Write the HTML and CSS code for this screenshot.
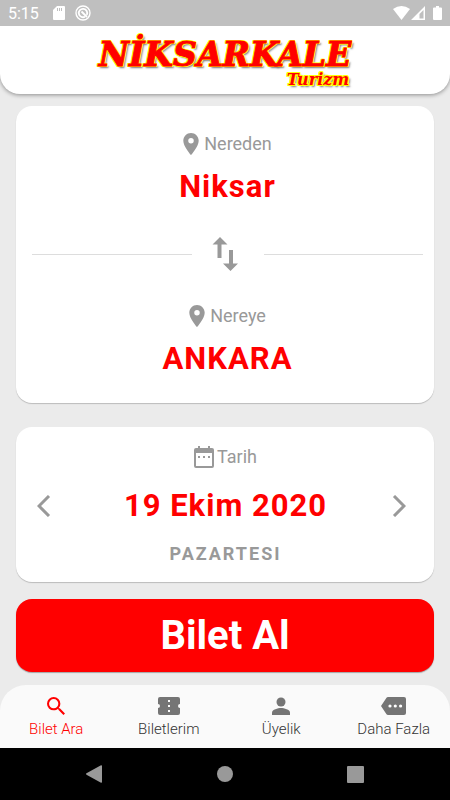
FILE: index.html
```
<!DOCTYPE html>
<html lang="tr">
<head>
  <meta charset="UTF-8" />
  <meta name="viewport" content="width=device-width, initial-scale=1" />
  <title>Niksarkale Turizm</title>
  <link rel="stylesheet" href="styles.css">
</head>
<body>
  <div class="statusbar">
    <span class="clock">5:15</span>
    <svg class="sd" width="12" height="14" viewBox="0 0 12 14"><path fill="#fff" d="M4 0h7a1 1 0 0 1 1 1v12a1 1 0 0 1-1 1H1a1 1 0 0 1-1-1V4z"/><path stroke="#bfbfbf" d="M4.500 2v3M6.500 2v3M8.500 2v3"/></svg>
    <svg class="sync" width="16" height="16" viewBox="0 0 16 16" fill="none" stroke="#fff"><circle cx="8" cy="8" r="7" stroke-width="1.400"/><path stroke-width="1.800" d="M10 11.700A4.200 4.200 0 1 1 11.800 9.800M6.500 6.500l5.500 5.500"/></svg>
    <div class="signals">
      <svg width="17" height="14" viewBox="0 0 17 14"><path fill="#fff" d="M0 3Q8.500-3 17 3L8.500 14z"/></svg>
      <svg width="14" height="14" viewBox="0 0 14 14"><path fill="#fff" fill-rule="evenodd" d="M14 0v14H0zM12.500 4v8.500h-4V8z"/></svg>
      <svg class="battery" width="9" height="14" viewBox="0 0 9 14"><path fill="#fff" d="M3 0h3v1.500h2a1 1 0 0 1 1 1V13a1 1 0 0 1-1 1H1a1 1 0 0 1-1-1V2.500a1 1 0 0 1 1-1h2z"/></svg>
    </div>
  </div>

  <header>
    <div class="logo">
      <h1>NİKSARKALE</h1>
      <span>Turizm</span>
    </div>
  </header>

  <main>
    <section class="card route">
      <button class="place">
        <span class="label">
          <svg width="16" height="22" viewBox="5 2 14 20"><path fill="#999" d="M12 2C8.130 2 5 5.130 5 9c0 5.250 7 13 7 13s7-7.750 7-13c0-3.870-3.130-7-7-7zm0 9.500a2.500 2.500 0 1 1 0-5 2.500 2.500 0 0 1 0 5z"/></svg>
          Nereden
        </span>
        <span class="value">Niksar</span>
      </button>
      <div class="divider">
        <button class="swap" aria-label="Değiştir">
          <svg width="26" height="34" viewBox="0 0 26 34" fill="#999"><path d="M8 0l7.500 7.500h-6V21h-4V7.500h-5zM17 13h4v13.500h5L18.500 34 11 26.500h6z"/></svg>
        </button>
      </div>
      <button class="place">
        <span class="label">
          <svg width="16" height="22" viewBox="5 2 14 20"><path fill="#999" d="M12 2C8.130 2 5 5.130 5 9c0 5.250 7 13 7 13s7-7.750 7-13c0-3.870-3.130-7-7-7zm0 9.500a2.500 2.500 0 1 1 0-5 2.500 2.500 0 0 1 0 5z"/></svg>
          Nereye
        </span>
        <span class="value">ANKARA</span>
      </button>
    </section>

    <section class="card date">
      <button class="arrow" aria-label="Önceki gün">
        <svg width="14" height="22" viewBox="0 0 14 22"><path fill="none" stroke="#999" stroke-width="3" d="M12 1L2 11l10 10"/></svg>
      </button>
      <button class="day">
        <span class="label">
          <svg width="20" height="22" viewBox="0 0 20 22"><path fill="#999" fill-rule="evenodd" d="M4 0h2v2h8V0h2v2h2a2 2 0 0 1 2 2v16a2 2 0 0 1-2 2H2a2 2 0 0 1-2-2V4a2 2 0 0 1 2-2h2zM2 7v13h16V7zM4 10h2v2H4zM9 10h2v2H9zM14 10h2v2h-2z"/></svg>
          Tarih
        </span>
        <span class="value">19 Ekim 2020</span>
        <span class="weekday">PAZARTESI</span>
      </button>
      <button class="arrow" aria-label="Sonraki gün">
        <svg width="14" height="22" viewBox="0 0 14 22"><path fill="none" stroke="#999" stroke-width="3" d="M2 1l10 10L2 21"/></svg>
      </button>
    </section>

    <button class="buy">Bilet Al</button>
  </main>

  <nav class="tabs">
    <a href="#ara" class="active">
      <svg width="18" height="18" viewBox="3 3 17.500 17.500"><path fill="currentColor" d="M15.500 14h-.790l-.280-.270A6.470 6.470 0 0 0 16 9.500 6.500 6.500 0 1 0 9.500 16c1.610 0 3.090-.590 4.230-1.570l.270.280v.790l5 4.990L20.490 19l-4.990-5zm-6 0a4.500 4.500 0 1 1 0-9 4.500 4.500 0 0 1 0 9z"/></svg>
      Bilet Ara
    </a>
    <a href="#biletlerim">
      <svg width="22" height="18" viewBox="0 0 22 18"><path fill="#757575" fill-rule="evenodd" d="M2 0h18a2 2 0 0 1 2 2v5a2 2 0 0 0 0 4v5a2 2 0 0 1-2 2H2a2 2 0 0 1-2-2v-5a2 2 0 0 0 0-4V2a2 2 0 0 1 2-2zM10 3v2h2V3zM10 8v2h2V8zM10 13v2h2v-2z"/></svg>
      Biletlerim
    </a>
    <a href="#uyelik">
      <svg width="18" height="18" viewBox="0 0 18 18" fill="#757575"><circle cx="9" cy="5" r="4.500"/><path d="M9 11c-3 0-9 1.500-9 4.500V18h18v-2.500C18 12.500 12 11 9 11z"/></svg>
      Üyelik
    </a>
    <a href="#fazla">
      <svg width="25" height="18" viewBox="0 0 25 18"><path fill="#757575" d="M7 0h16a2 2 0 0 1 2 2v14a2 2 0 0 1-2 2H7q-1 0-1.500-.8L0 9 5.500.8Q6 0 7 0z"/><g fill="#fff"><circle cx="9" cy="9" r="1.600"/><circle cx="14.300" cy="9" r="1.600"/><circle cx="19.600" cy="9" r="1.600"/></g></svg>
      Daha Fazla
    </a>
  </nav>

  <div class="sysnav">
    <button aria-label="Geri"><svg width="16" height="18" viewBox="0 0 16 18"><path fill="#999" d="M15 .2Q16 0 16 1v16q0 1-1 .8L.5 9.700q-1-.7 0-1.400z"/></svg></button>
    <button aria-label="Ana ekran"><svg width="16" height="16" viewBox="0 0 16 16"><circle cx="8" cy="8" r="8" fill="#999"/></svg></button>
    <button aria-label="Son uygulamalar"><svg width="17" height="17" viewBox="0 0 17 17"><rect width="17" height="17" rx="1" fill="#999"/></svg></button>
  </div>
</body>
</html>
```
FILE: styles.css
```
* {
  box-sizing: border-box;
}
body {
  margin: 0;
  min-height: 100vh;
  display: flex;
  flex-direction: column;
  background: #ebebeb;
  font-family: Roboto, sans-serif;
  color: #999;
}
button {
  border: 0;
  padding: 0;
  background: none;
  font-family: inherit;
  color: inherit;
  cursor: pointer;
}
svg {
  display: block;
}

/* status bar */
.statusbar {
  display: flex;
  align-items: center;
  height: 26px;
  padding: 0 8px;
  background: #bfbfbf;
  color: #fff;
  font-size: 16px;
}
.sd {
  margin-left: 14px;
}
.sync {
  margin-left: 10px;
}
.signals {
  display: flex;
  gap: 1px;
  margin-left: auto;
}
.battery {
  margin-left: 7px;
}

/* header */
header {
  display: flex;
  justify-content: center;
  height: 68px;
  padding-top: 10px;
  background: #fff;
  border-radius: 0 0 20px 20px;
  box-shadow: 0 1px 4px rgba(0, 0, 0, 0.4);
  clip-path: inset(0 0 -10px 0);
}
.logo {
  display: flex;
  flex-direction: column;
  align-items: flex-end;
  font-family: "DejaVu Serif", serif;
  font-style: italic;
  font-weight: bold;
  color: #f00;
  text-shadow: 1px 0 #ff0, -1px 0 #ff0, 0 1px #ff0, 0 -1px #ff0,
    1px 1px #ff0, -1px -1px #ff0, 1px -1px #ff0, -1px 1px #ff0,
    2px 2px 2px #777;
}
.logo h1 {
  margin: 0;
  font-size: 33px;
  line-height: 38px;
  -webkit-text-stroke: 1px #f00;
}
.logo span {
  margin-right: 2px;
  font-size: 16px;
  line-height: 12px;
}

/* content */
main {
  flex: 1;
  padding: 12px 16px 13px;
}
.card {
  background: #fff;
  border-radius: 16px;
  box-shadow: 0 1px 1px rgba(0, 0, 0, 0.2);
}
.label {
  display: flex;
  align-items: center;
  justify-content: center;
  gap: 5px;
  font-size: 18px;
  line-height: 24px;
}
.value {
  display: block;
  color: #f00;
  font-size: 31px;
  font-weight: bold;
  line-height: 40px;
  letter-spacing: 1px;
}
.route {
  padding: 26px 11px 24px 16px;
  margin-bottom: 24px;
}
.place {
  display: block;
  width: 100%;
}
.place .value {
  margin-top: 11px;
}
.divider {
  display: flex;
  align-items: center;
  margin: 30px 0 33px;
}
.divider::before,
.divider::after {
  content: "";
  flex: 1;
  height: 1px;
  background: #ddd;
}
.swap {
  padding: 0 26px 0 20px;
}
.date {
  display: flex;
  align-items: center;
  justify-content: space-between;
  padding: 18px 20px 16px 21px;
  margin-bottom: 17px;
}
.arrow {
  width: 22px;
}
.date .label {
  gap: 3px;
}
.date .value {
  margin-top: 17px;
}
.weekday {
  display: block;
  margin-top: 16px;
  font-size: 18px;
  font-weight: bold;
  line-height: 24px;
  letter-spacing: 2px;
}
.buy {
  display: block;
  width: 100%;
  height: 73px;
  border-radius: 16px;
  background: #f00;
  color: #fff;
  font-size: 40px;
  font-weight: bold;
  box-shadow: 0 1px 1px rgba(0, 0, 0, 0.3);
}

/* bottom tabs */
.tabs {
  display: grid;
  grid-template-columns: repeat(4, 1fr);
  height: 63px;
  padding-top: 12px;
  background: #fafafa;
  border-radius: 26px 26px 0 0;
}
.tabs a {
  display: flex;
  flex-direction: column;
  align-items: center;
  gap: 5px;
  color: #333;
  font-size: 15px;
  font-weight: 300;
  line-height: 18px;
  text-decoration: none;
}
.tabs a.active {
  color: #f00;
}

.sysnav {
  display: flex;
  align-items: center;
  justify-content: space-evenly;
  gap: 28px;
  height: 52px;
  background: #000;
}
```
